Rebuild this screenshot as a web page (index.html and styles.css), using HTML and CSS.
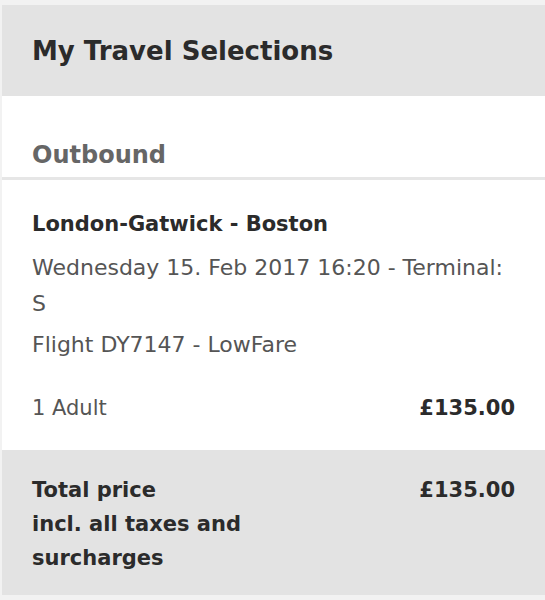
FILE: index.html
```html
<!DOCTYPE html>
<html lang="en">
<head>
    <meta charset="UTF-8">
    <meta name="viewport" content="width=device-width, initial-scale=1.0">
    <title>My Travel Selections</title>
    <link rel="stylesheet" href="styles.css">
</head>
<body>

    <div class="summary">
        <!-- header -->
        <div class="summary-header">
            <h1>My Travel Selections</h1>
        </div>

        <!-- outbound leg -->
        <div class="leg">
            <h2 class="leg-title">Outbound</h2>
            <div class="leg-body">
                <div class="route">London-Gatwick - Boston</div>
                <div class="departure">Wednesday 15. Feb 2017 16:20 - Terminal: S</div>
                <div class="flight">Flight DY7147 - LowFare</div>
                <div class="price-row">
                    <span class="pax">1 Adult</span>
                    <span class="amount">£135.00</span>
                </div>
            </div>
        </div>

        <!-- total -->
        <div class="total">
            <div class="total-label">Total price<br>incl. all taxes and<br>surcharges</div>
            <div class="amount">£135.00</div>
        </div>
    </div>

</body>
</html>
```

FILE: styles.css
```css
body {
    margin: 0;
    background-color: #f2f2f2;
    font-family: "DejaVu Sans", "Open Sans", sans-serif;
    color: #2b2b2b;
}

.summary {
    margin: 5px 0 5px 2px;
    background-color: #fff;
}

.summary-header {
    background-color: #e3e3e3;
    height: 91px;
    padding: 0 30px;
    display: flex;
    align-items: center;
}

.summary-header h1 {
    margin: 0;
    font-size: 26px;
    font-weight: bold;
    line-height: 30px;
}

.leg-title {
    margin: 0;
    padding: 44px 30px 7px;
    font-size: 24px;
    line-height: 30px;
    font-weight: bold;
    color: #666;
    border-bottom: 3px solid #e6e6e6;
}

.leg-body {
    padding: 29px 30px 24px;
    font-size: 22px;
    line-height: 36px;
    color: #555;
}

.route {
    font-weight: bold;
    font-size: 21px;
    color: #2b2b2b;
    line-height: 30px;
    margin-bottom: 11px;
}

.departure {
    margin-bottom: 5px;
}

.flight {
    margin-bottom: 27px;
}

.price-row {
    display: flex;
    justify-content: space-between;
    font-size: 21px;
}

.amount {
    font-weight: bold;
    color: #2b2b2b;
}

.total {
    background-color: #e3e3e3;
    padding: 23px 30px 20px;
    display: flex;
    justify-content: space-between;
    align-items: flex-start;
    font-size: 21px;
    line-height: 34px;
}

.total-label {
    font-weight: bold;
}
```
